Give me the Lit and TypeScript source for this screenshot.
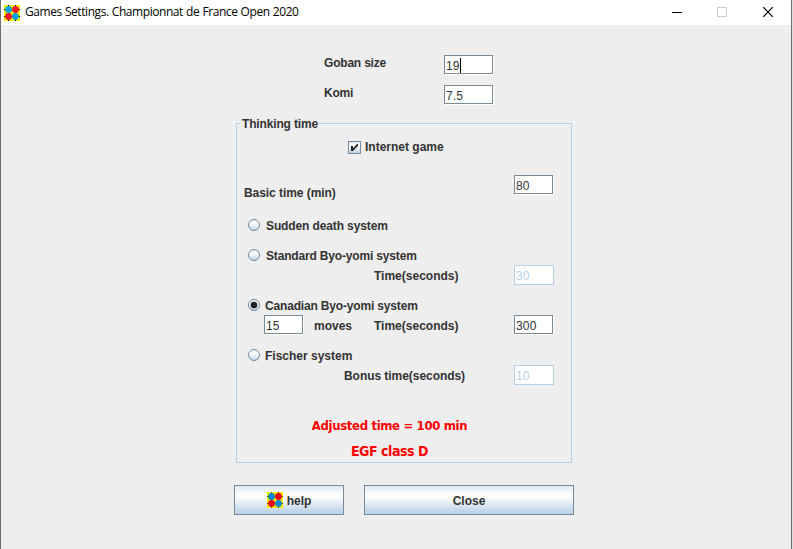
import { LitElement, html, css, svg, nothing } from "lit";
import { customElement, property } from "lit/decorators.js";

@customElement("goban-logo")
class GobanLogo extends LitElement {
  @property() line = "#000";
  @property() blue = "#00a2e8";
  @property() red = "#ed1c24";
  static styles = css`
    :host { display: block; width: 16px; height: 16px; flex: none; }
    svg { display: block; }
  `;
  render() {
    const stones = [
      [4.5, 4.5, this.blue],
      [11.5, 4.5, this.red],
      [4.5, 11.5, this.red],
      [11.5, 11.5, this.blue],
    ] as const;
    return html`<svg width="16" height="16" viewBox="0 0 16 16">
      <rect width="16" height="16" fill="#fff200" />
      <path d="M4.5 0V16M11.5 0V16M0 4.5H16M0 11.5H16" stroke=${this.line} />
      ${stones.map(([x, y, c]) => svg`<circle cx=${x} cy=${y} r="3.4" fill=${c} />`)}
    </svg>`;
  }
}

@customElement("text-field")
class TextField extends LitElement {
  @property() value = "";
  @property({ type: Boolean, reflect: true }) disabled = false;
  @property({ type: Boolean }) caret = false;
  static styles = css`
    :host {
      display: flex; box-sizing: border-box; flex: none; width: 39px; height: 19px;
      border: 1px solid #7a8a99; box-shadow: 1px 1px 0 #fff; background: #fff;
      padding: 2px 0 0 1px; font: 12px/17px "Liberation Sans", Arial, sans-serif; color: #333;
      letter-spacing: 0.15px;
    }
    :host([disabled]) { width: 40px; height: 20px; border-color: #b8cfe5; box-shadow: none; color: #b8cfe5; }
    .caret { width: 1px; height: 15px; background: #000; }
  `;
  render() {
    return html`<span>${this.value}</span>${this.caret ? html`<span class="caret"></span>` : nothing}`;
  }
}

@customElement("radio-option")
class RadioOption extends LitElement {
  @property() label = "";
  @property({ type: Boolean }) checked = false;
  static styles = css`
    :host { display: flex; align-items: center; height: 20px; gap: 5px; }
    svg { display: block; flex: none; }
    span { padding-top: 2px; }
  `;
  render() {
    return html`<svg width="13" height="13" viewBox="0 0 13 13">
        <defs>
          <linearGradient id="g" x1="0" y1="0" x2="0" y2="1">
            <stop offset="0" stop-color="#dde8f3" />
            <stop offset=".35" stop-color="#fff" />
            <stop offset="1" stop-color="#b8cfe5" />
          </linearGradient>
        </defs>
        <circle cx="6" cy="6" r="5.5" fill="url(#g)" stroke="#7a8a99" />
        ${this.checked ? svg`<circle cx="6" cy="6" r="3.3" fill="#222" />` : nothing}
      </svg>
      <span>${this.label}</span>`;
  }
}

@customElement("app-root")
class AppRoot extends LitElement {
  static styles = css`
    :host {
      display: block; width: 793px; height: 549px; overflow: hidden; background: #dcdcdc;
      font: bold 12px/20px "Liberation Sans", Arial, sans-serif; color: #333;
    }
    .window {
      box-sizing: border-box; width: 792px; height: 549px; background: #eee;
      border: solid #6e6e6e; border-width: 0 1px;
    }
    .titlebar { display: flex; align-items: center; height: 25px; padding-left: 3px; background: #fff; }
    .title {
      margin-left: 5px; font: 12px/24px "Open Sans", "Noto Sans", sans-serif; color: #000;
      white-space: nowrap; letter-spacing: -0.44px; word-spacing: 0.5px; padding-bottom: 1px;
    }
    .controls { display: flex; margin-left: auto; height: 25px; }
    .controls svg { display: block; }
    .basics { display: grid; grid-template-columns: 120px 50px; row-gap: 10px; padding: 30px 0 0 323px; }
    .basics .row { display: contents; }
    .basics span { height: 20px; line-height: 16px; letter-spacing: -0.2px; }
    .basics text-field { width: 49px; }
    .panel {
      box-sizing: border-box; width: 336px; height: 340px; margin: 18px 0 0 235px;
      border: 1px solid #b8cfe5; display: flex; flex-direction: column;
    }
    .legend {
      align-self: flex-start; margin: -10px 0 0 3px; padding: 0 1px 0 2px; background: #eee;
      height: 18px; line-height: 20px; letter-spacing: -0.15px;
    }
    .check { display: flex; align-items: center; gap: 4px; height: 20px; margin: 5px 0 0 111px; }
    .line { display: grid; grid-template-columns: 137px 140px 40px; height: 20px; flex: none; line-height: 22px; }
    .line .end { grid-column: 3; }
    .basic { margin-top: 18px; line-height: 20px; }
    .basic .name { grid-column: 1 / 3; padding: 8px 0 0 7px; letter-spacing: -0.06px; }
    radio-option { margin-left: 11px; }
    .sudden { margin-top: 20px; letter-spacing: -0.12px; }
    .gap { margin-top: 10px; }
    .byo { letter-spacing: -0.17px; }
    .near { gap: 4px; }
    .caption { grid-column: 2; }
    .wide .caption { margin-left: -30px; letter-spacing: -0.05px; }
    .moves { display: flex; gap: 11px; padding-left: 27px; }
    .result {
      margin-top: 30px; text-align: center; color: #f00; height: 20px; padding-right: 29px; white-space: nowrap;
      font: bold 13px/22px "DejaVu Sans Condensed", "DejaVu Sans", sans-serif; font-stretch: condensed;
      letter-spacing: -0.35px;
    }
    .class { margin-top: 5px; font-size: 14px; letter-spacing: -0.45px; }
    .actions { display: flex; gap: 20px; margin: 22px 0 0 233px; }
    .button {
      box-sizing: border-box; display: flex; align-items: center; justify-content: center; gap: 4px;
      width: 110px; height: 30px; border: 1px solid #7a8a99;
      background: linear-gradient(#dde8f3, #fff 30%, #fff 36%, #b8cfe5);
    }
    .button span { padding-top: 2px; }
    .close { width: 210px; }
  `;

  render() {
    return html`<div class="window">
      <div class="titlebar">
        <goban-logo></goban-logo>
        <span class="title">Games Settings. Championnat de France Open 2020</span>
        <div class="controls">
          <svg width="120" height="25" viewBox="671 0 120 25" fill="none">
            <path d="M672 12.5H682" stroke="#000" />
            <rect x="717.5" y="7.5" width="9" height="9" stroke="#ccc" />
            <path d="M763.2 7.2L772.8 16.8M772.8 7.2L763.2 16.8" stroke="#000" stroke-width="1.2" />
          </svg>
        </div>
      </div>
      <div class="basics">
        <div class="row"><span>Goban size</span><text-field value="19" caret></text-field></div>
        <div class="row"><span>Komi</span><text-field value="7.5"></text-field></div>
      </div>
      <div class="panel">
        <div class="legend">Thinking time</div>
        <div class="check">
          <svg width="13" height="13" viewBox="0 0 13 13">
            <defs>
              <linearGradient id="c" x1="0" y1="0" x2="0" y2="1">
                <stop offset="0" stop-color="#dde8f3" />
                <stop offset=".35" stop-color="#fff" />
                <stop offset="1" stop-color="#b8cfe5" />
              </linearGradient>
            </defs>
            <rect x=".5" y=".5" width="12" height="12" fill="url(#c)" stroke="#7a8a99" />
            <path d="M3 5H5V7.4L9 3H10V4.8L5 10H3Z" fill="#222" />
          </svg>
          <span>Internet game</span>
        </div>
        <div class="line basic">
          <span class="name">Basic time (min)</span><text-field class="end" value="80"></text-field>
        </div>
        <radio-option class="sudden" label="Sudden death system"></radio-option>
        <radio-option class="gap byo" label="Standard Byo-yomi system"></radio-option>
        <div class="line">
          <span class="caption">Time(seconds)</span><text-field class="end" value="30" disabled></text-field>
        </div>
        <radio-option class="gap byo near" checked label="Canadian Byo-yomi system"></radio-option>
        <div class="line">
          <div class="moves"><text-field value="15"></text-field><span>moves</span></div>
          <span class="caption">Time(seconds)</span><text-field class="end" value="300"></text-field>
        </div>
        <radio-option class="gap near" label="Fischer system"></radio-option>
        <div class="line wide">
          <span class="caption">Bonus time(seconds)</span><text-field class="end" value="10" disabled></text-field>
        </div>
        <div class="result">Adjusted time = 100 min</div>
        <div class="result class">EGF class D</div>
      </div>
      <div class="actions">
        <div class="button">
          <goban-logo line="#555500" blue="#0b86d0" red="#e00b12"></goban-logo><span>help</span>
        </div>
        <div class="button close"><span>Close</span></div>
      </div>
    </div>`;
  }
}
